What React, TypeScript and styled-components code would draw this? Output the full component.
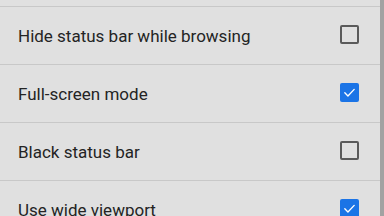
import React from "react";
import styled, { createGlobalStyle } from "styled-components";

const Global = createGlobalStyle`
  html, body { margin: 0; padding: 0; background: #e0e0e0; overflow: hidden; }
  body { font-family: Roboto, "Noto Sans", sans-serif; }
`;

const Screen = styled.div`
  width: 384px;
  height: 216px;
  display: flex;
  overflow: hidden;
  background: #e0e0e0;
`;

const List = styled.div`
  flex: 1;
  padding-top: 6px;
  display: flex;
  flex-direction: column;
`;

const Row = styled.div`
  flex: 0 0 58px;
  box-sizing: border-box;
  height: 58px;
  border-top: 1px solid #c8c8c8;
  display: flex;
  align-items: center;
  padding: 0 21px 0 18px;
`;

const Label = styled.span`
  flex: 1;
  font-size: 17px;
  color: #242424;
  margin-top: 1px;
`;

const Box = styled.div<{ $checked: boolean }>`
  width: 19px;
  height: 19px;
  box-sizing: border-box;
  border-radius: 2px;
  margin-top: -3px;
  border: ${(p) => (p.$checked ? "none" : "2px solid #5a5a5a")};
  background: ${(p) => (p.$checked ? "#1b74e6" : "transparent")};
  display: flex;
  align-items: center;
  justify-content: center;
`;

const Scrollbar = styled.div`
  width: 4px;
  flex: 0 0 4px;
  background: #a2a2a2;
`;

const items = [
  { label: "Hide status bar while browsing", checked: false },
  { label: "Full-screen mode", checked: true },
  { label: "Black status bar", checked: false },
  { label: "Use wide viewport", checked: true },
];

export default function App() {
  return (
    <Screen>
      <Global />
      <List>
        {items.map((it) => (
          <Row key={it.label}>
            <Label>{it.label}</Label>
            <Box $checked={it.checked}>
              {it.checked && (
                <svg width="15" height="15" viewBox="0 0 24 24">
                  <path d="M4.5 12.5l5 5L19.5 7" fill="none" stroke="#ffffff" strokeWidth="2.2" strokeLinecap="round" strokeLinejoin="round" />
                </svg>
              )}
            </Box>
          </Row>
        ))}
      </List>
      <Scrollbar />
    </Screen>
  );
}
